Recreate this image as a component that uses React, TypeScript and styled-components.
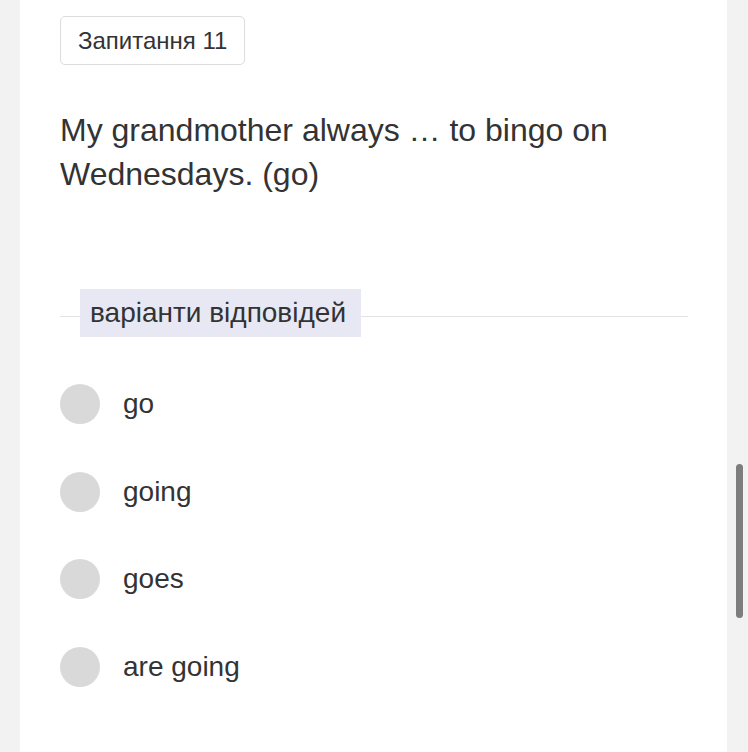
import React from 'react';
import styled, { createGlobalStyle } from 'styled-components';

const GlobalStyle = createGlobalStyle`
  html, body {
    margin: 0;
    padding: 0;
    background: #f2f2f2;
    font-family: "Liberation Sans", Arial, sans-serif;
    color: #333333;
  }
`;

const Page = styled.div`
  min-height: 752px;
  padding: 0 21px 0 20px;
  box-sizing: border-box;
  display: flex;
`;

const Card = styled.div`
  flex: 1;
  background: #ffffff;
  padding: 16px 39px 40px 40px;
  box-sizing: border-box;
`;

const Badge = styled.div`
  display: inline-block;
  border: 1px solid #dcdcdc;
  border-radius: 5px;
  padding: 10px 17px;
  font-size: 24px;
  line-height: 27px;
`;

const Question = styled.div`
  margin-top: 43px;
  font-size: 32px;
  line-height: 44px;
  color: #333333;
`;

const Legend = styled.div`
  margin-top: 93px;
  display: flex;
  align-items: flex-start;

  &::before,
  &::after {
    content: '';
    height: 1px;
    margin-top: 27px;
    background: #e3e3e3;
  }

  &::before {
    width: 20px;
  }

  &::after {
    flex: 1;
  }
`;

const LegendLabel = styled.span`
  background: #e8e8f5;
  padding: 0 15px 0 10px;
  font-size: 28px;
  line-height: 48px;
`;

const Options = styled.div`
  margin-top: 23px;
  display: flex;
  flex-direction: column;
`;

const Option = styled.label`
  height: 87.7px;
  display: flex;
  align-items: center;
  gap: 23px;
  font-size: 28px;
  cursor: pointer;
`;

const Radio = styled.span`
  width: 40px;
  height: 40px;
  border-radius: 50%;
  background: #d9d9d9;
  flex-shrink: 0;
`;

const ScrollThumb = styled.div`
  position: fixed;
  left: 736px;
  top: 464px;
  width: 7px;
  height: 154px;
  border-radius: 4px;
  background: #7d7d7d;
`;

const answers = ['go', 'going', 'goes', 'are going'];

const App = () => {
  return (
    <>
      <GlobalStyle />
      <Page>
        <Card>
          <Badge>Запитання 11</Badge>
          <Question>
            My grandmother always … to bingo on Wednesdays. (go)
          </Question>
          <Legend>
            <LegendLabel>варіанти відповідей</LegendLabel>
          </Legend>
          <Options>
            {answers.map((a) => (
              <Option key={a}>
                <Radio />
                {a}
              </Option>
            ))}
          </Options>
        </Card>
      </Page>
      <ScrollThumb />
    </>
  );
};

export default App;
